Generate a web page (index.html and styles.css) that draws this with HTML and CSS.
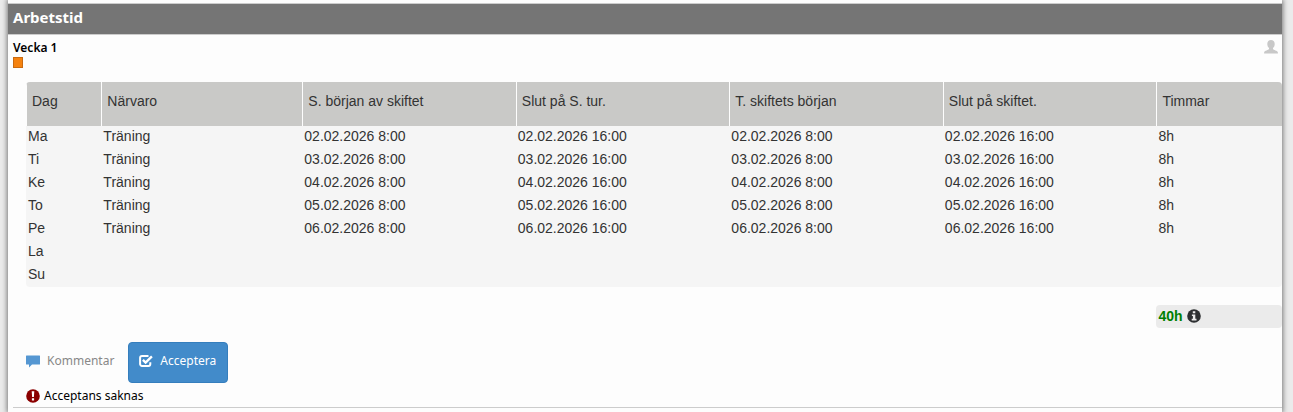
FILE: index.html
```html
<!DOCTYPE html>
<html lang="sv">
<head>
<meta charset="utf-8">
<title>Arbetstid</title>
<link rel="stylesheet" href="styles.css">
</head>
<body>
<main class="page">
  <h1 class="section-title">Arbetstid</h1>
  <section class="week">
    <header class="week-head">
      <div>
        <h2 class="week-name">Vecka 1</h2>
        <span class="marker"></span>
      </div>
      <svg class="user" viewBox="0 0 14 14" aria-hidden="true"><path d="M7 0C4.800 0 3.300 1.500 3.300 3.900c0 1.800.7 3.200 1.700 4.100v1C4.800 9.900.3 10.700.1 12.400V13.500h13.800v-1.100c-.2-1.700-4.700-2.500-4.900-3.400V8c1-.9 1.700-2.300 1.700-4.100C10.700 1.500 9.200 0 7 0z"/></svg>
    </header>
    <div class="schedule">
      <table class="shifts">
        <colgroup><col class="day"><col class="presence"><col class="time"><col class="time"><col class="time"><col class="time"><col class="hours"></colgroup>
        <thead>
          <tr><th>Dag</th><th>Närvaro</th><th>S. början av skiftet</th><th>Slut på S. tur.</th><th>T. skiftets början</th><th>Slut på skiftet.</th><th>Timmar</th></tr>
        </thead>
        <tbody>
          <tr><td>Ma</td><td>Träning</td><td>02.02.2026 8:00</td><td>02.02.2026 16:00</td><td>02.02.2026 8:00</td><td>02.02.2026 16:00</td><td>8h</td></tr>
          <tr><td>Ti</td><td>Träning</td><td>03.02.2026 8:00</td><td>03.02.2026 16:00</td><td>03.02.2026 8:00</td><td>03.02.2026 16:00</td><td>8h</td></tr>
          <tr><td>Ke</td><td>Träning</td><td>04.02.2026 8:00</td><td>04.02.2026 16:00</td><td>04.02.2026 8:00</td><td>04.02.2026 16:00</td><td>8h</td></tr>
          <tr><td>To</td><td>Träning</td><td>05.02.2026 8:00</td><td>05.02.2026 16:00</td><td>05.02.2026 8:00</td><td>05.02.2026 16:00</td><td>8h</td></tr>
          <tr><td>Pe</td><td>Träning</td><td>06.02.2026 8:00</td><td>06.02.2026 16:00</td><td>06.02.2026 8:00</td><td>06.02.2026 16:00</td><td>8h</td></tr>
          <tr><td>La</td><td></td><td></td><td></td><td></td><td></td><td></td></tr>
          <tr><td>Su</td><td></td><td></td><td></td><td></td><td></td><td></td></tr>
        </tbody>
      </table>
      <div class="total">
        <span>40h</span>
        <svg class="info" viewBox="0 0 14 14" aria-hidden="true"><circle cx="7" cy="7" r="6.800" fill="#2d2f31"/><path fill="#ebebeb" d="M5.800 2.300h2.500v2H5.800zM4.900 5.500h3.400v4.200h1.200v1.700H4.700V9.700h1.200V7.100h-1z"/></svg>
      </div>
      <div class="actions">
        <button type="button" class="comment">
          <svg class="icon" viewBox="0 0 14 14" aria-hidden="true"><path fill="#5597d2" d="M.5 1.500h13a.5.500 0 0 1 .5.500v8a.5.500 0 0 1-.5.500H6L3 13.500v-3H.5A.5.500 0 0 1 0 10V2a.5.500 0 0 1 .5-.5z"/></svg>
          Kommentar
        </button>
        <button type="button" class="accept">
          <svg class="icon" viewBox="0 0 14 14" aria-hidden="true"><path fill="none" stroke="#fff" stroke-width="2" d="M9.500 1.900H3A1.900 1.900 0 0 0 1.100 3.800V10A1.900 1.900 0 0 0 3 11.900h6.400a1.900 1.900 0 0 0 1.900-1.900V8.200"/><path fill="none" stroke="#fff" stroke-width="2.400" d="M3.900 5.900l2.700 2.700 6.300-6.300"/></svg>
          Acceptera
        </button>
      </div>
      <p class="status">
        <svg class="alert" viewBox="0 0 14 14" aria-hidden="true"><circle cx="7" cy="7" r="6.800" fill="#8b0000"/><path fill="#fff" d="M5.700 2.200h2.600L7.900 8H6.100zM5.900 9.200h2.200v2.200H5.900z"/></svg>
        Acceptans saknas
      </p>
    </div>
  </section>
</main>
</body>
</html>
```
FILE: styles.css
```css
* { box-sizing: border-box; }
body {
  margin: 0;
  padding: 0 11px 0 8px;
  background: #ebebeb;
  font: 12px/18px "Noto Sans", "Open Sans", sans-serif;
  color: #000;
}
.page {
  min-height: 100vh;
  padding-top: 3px;
  background: #fdfdfd;
  box-shadow: 0 0 5px 1px #777;
}
.section-title {
  margin: 0;
  padding: 2px 5px 6px;
  border: solid #ccc;
  border-width: 1px 0;
  background: #757575;
  color: #fff;
  font-size: 15px;
  line-height: 22px;
  font-weight: 700;
}
.week {
  margin-left: 5px;
  padding-top: 4px;
  border-bottom: 1px solid #ccc;
}
.week-head {
  display: flex;
  justify-content: space-between;
  padding-right: 4px;
}
.week-name {
  margin: 0;
  font-size: 12px;
  line-height: 18px;
  font-weight: 600;
}
.marker {
  display: block;
  width: 10px;
  height: 11px;
  border: 1px solid #c96a10;
  background: #f5820f;
}
.user {
  width: 14px;
  height: 14px;
  margin-top: 1px;
  fill: #c8c8c8;
}
.schedule { padding: 14px 0 2px 13px; }
.shifts {
  width: 100%;
  table-layout: fixed;
  border-collapse: separate;
  border-spacing: 0;
  border-radius: 4px;
  overflow: hidden;
  background: #f5f5f5;
  color: #333;
  font: 14px/20px "Liberation Sans", Arial, sans-serif;
}
.day { width: 6%; }
.presence { width: 16%; }
.time { width: 17%; }
.hours { width: 10%; }
.shifts th {
  height: 44px;
  padding: 0 6px 6px 5px;
  border-left: 1px solid #fdfdfd;
  background: #c9c9c7;
  font-weight: 400;
  text-align: left;
}
.shifts td {
  height: 23px;
  padding: 0 2px 3px;
}
.total {
  display: flex;
  align-items: center;
  gap: 4px;
  width: 10%;
  height: 23px;
  margin: 18px 0 14px auto;
  padding: 0 2px 2px;
  border-radius: 4px;
  background: #ebebeb;
  color: #008000;
  font: bold 14px/20px "Liberation Sans", Arial, sans-serif;
}
.info, .icon, .alert {
  flex: none;
  width: 14px;
  height: 14px;
}
.actions {
  display: flex;
  gap: 14px;
}
.comment, .accept {
  display: flex;
  align-items: center;
  gap: 7px;
  height: 41px;
  padding: 0 0 3px;
  border: 0;
  background: none;
  color: #888;
  font: inherit;
  cursor: pointer;
}
.accept {
  padding: 0 11px 3px 10px;
  border: 1px solid #357ebd;
  border-radius: 4px;
  background: #428bca;
  color: #fff;
}
.status {
  display: flex;
  align-items: center;
  gap: 4px;
  margin: 4px 0 0;
}
```
